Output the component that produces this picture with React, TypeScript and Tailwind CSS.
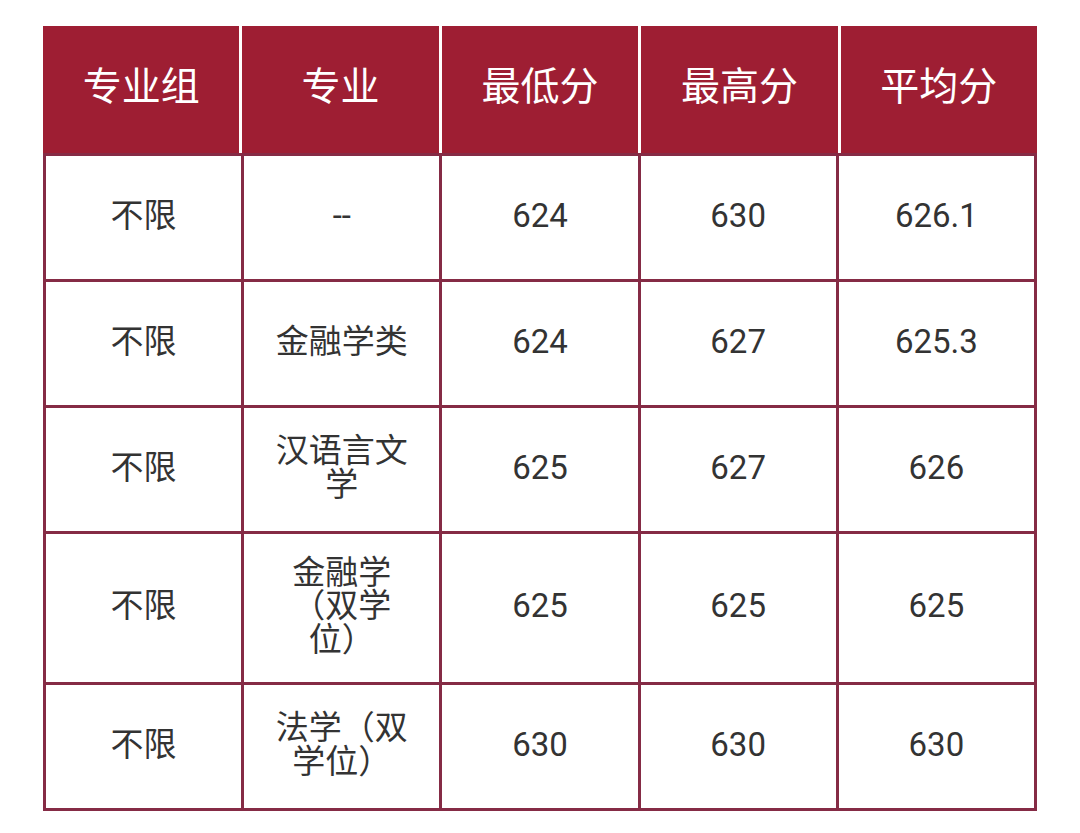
import React from 'react';

const headers = ['专业组', '专业', '最低分', '最高分', '平均分'];

const rows = [
  { group: '不限', major: '--', min: '624', max: '630', avg: '626.1', h: 'h-[126px]' },
  { group: '不限', major: '金融学类', min: '624', max: '627', avg: '625.3', h: 'h-[126px]' },
  { group: '不限', major: '汉语言文学', min: '625', max: '627', avg: '626', h: 'h-[126px]' },
  { group: '不限', major: '金融学（双学位）', min: '625', max: '625', avg: '625', h: 'h-[151px]' },
  { group: '不限', major: '法学（双学位）', min: '630', max: '630', avg: '630', h: 'h-[126px]' },
];

export default function App() {
  return (
    <div
      className="w-[1080px] h-[833px] bg-white pt-[26px] pl-[43px]"
      style={{ fontFamily: 'Roboto, "Noto Sans CJK SC", sans-serif' }}
    >
      <div className="w-[994px]">
        {/* Header */}
        <div className="grid grid-cols-5 gap-x-[3px] bg-white">
          {headers.map((h) => (
            <div
              key={h}
              className="h-[127px] bg-[#9e1e33] flex items-center justify-center text-white text-[39px] font-normal pb-[4px]"
            >
              {h}
            </div>
          ))}
        </div>

        {/* Body */}
        <table className="w-[994px] table-fixed border-collapse text-[#333333] text-[33px]">
          <tbody>
            {rows.map((r, i) => (
              <tr key={i} className={r.h}>
                {[r.group, r.major, r.min, r.max, r.avg].map((c, j) => (
                  <td
                    key={j}
                    className="border-[3px] border-[#852b45] text-center align-middle px-[28px] pb-[4px] leading-[1.02]"
                  >
                    {c}
                  </td>
                ))}
              </tr>
            ))}
          </tbody>
        </table>
      </div>
    </div>
  );
}
